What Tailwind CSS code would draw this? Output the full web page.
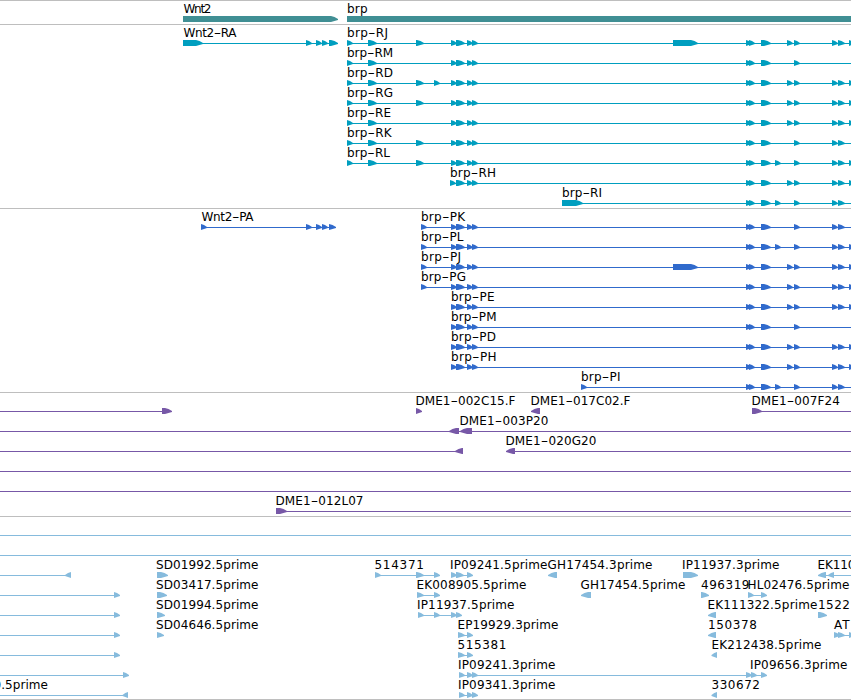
<!DOCTYPE html>
<html>
<head>
  <meta charset="UTF-8" />
  <title>Genome tracks</title>
  <script src="https://cdn.jsdelivr.net/npm/@tailwindcss/browser@4"></script>
</head>
<body class="bg-white overflow-hidden">
  <main class="flex flex-col w-[851px] h-[700px] overflow-hidden border-b border-[#bebebe]">
    <section id="genes" class="shrink-0 h-6 border-t border-[#bebebe] text-[#408f94]"></section>
    <section id="transcripts" class="shrink-0 h-[184px] border-t border-[#bebebe] text-[#009ebf]"></section>
    <section id="proteins" class="shrink-0 h-[184px] border-t border-[#bebebe] text-[#306acc]"></section>
    <section id="bacs" class="shrink-0 h-[124px] border-t border-[#bebebe] text-[#7758a7]"></section>
    <section id="ests" class="shrink-0 h-[183px] border-t border-[#bebebe] text-[#86bbdd]"></section>
  </main>

  <script>
    // exons are [start, end], a third value of -1 points the arrow left
    const END = 852;
    const start = [[451, 457], [456, 465], [467, 473], [472, 478]];
    const mid = [[746, 752], [749, 755], [761, 771]];
    const a = [775, 781], b = [787, 793], c = [794, 800];
    const tail = [[832, 838], [838, 845]];
    const edge = [849, 855];
    const five = [[347, 353], [368, 377]];
    const x416 = [416, 424];

    // row = { t: labels [text, x, width], l: lines [from, to], e: exons }
    const row = (t, l, e) => ({ t, l, e });

    const tracks = {
      genes: [
        row([["Wnt2", 183.5, 28], ["brp", 347, 20.5]], [], [[183, 338], [347, 860]]),
      ],
      transcripts: [
        row([["Wnt2-RA", 183.5, 53], ["brp-RJ", 347, 41]], [[183, 336], [347, END]],
          [[183, 203], [306, 312], [316, 322], [322, 328], [329, 338], ...five, x416, ...start, [673, 698], ...mid, b, c, ...tail, edge]),
        row([["brp-RM", 347, 46]], [[347, END]], [...five, ...start, ...mid, c]),
        row([["brp-RD", 347, 46]], [[347, END]], [...five, x416, [434, 440], ...start, ...mid, b, c, ...tail, edge]),
        row([["brp-RG", 347, 46]], [[347, END]], [...five, x416, ...start, ...mid, b, c, ...tail, edge]),
        row([["brp-RE", 347, 44]], [[347, END]], [...five, ...start, ...mid, b, c, ...tail, edge]),
        row([["brp-RK", 347, 44.5]], [[347, END]], [...five, x416, ...start, ...mid, c, ...tail]),
        row([["brp-RL", 347, 43]], [[347, END]], [...five, x416, ...start, ...mid, a, c, ...tail, edge]),
        row([["brp-RH", 450, 46]], [[450, END]], [[450, 456], ...start.slice(1), ...mid, b, c, ...tail, edge]),
        row([["brp-RI", 562, 40]], [[562, END]], [[562, 583], ...mid, a, c, ...tail]),
      ],
      proteins: [
        row([["Wnt2-PA", 201.5, 52], ["brp-PK", 421, 44]], [[201, 334], [421, END]],
          [[201, 207], [306, 312], [316, 322], [322, 328], [329, 336], [421, 427], ...start, ...mid, c, ...tail]),
        row([["brp-PL", 421, 42.5]], [[421, END]], [[421, 427], ...start, ...mid, a, c, ...tail, edge]),
        row([["brp-PJ", 421, 40]], [[421, END]], [[421, 427], ...start, [673, 698], ...mid, b, c, ...tail, edge]),
        row([["brp-PG", 421, 45]], [[421, END]], [[421, 427], ...start, ...mid, b, c, ...tail, edge]),
        row([["brp-PE", 451, 43.5]], [[451, END]], [...start, ...mid, b, c, ...tail, edge]),
        row([["brp-PM", 451, 45.5]], [[451, END]], [...start, ...mid, c]),
        row([["brp-PD", 451, 45]], [[451, END]], [...start, ...mid, b, c, ...tail, edge]),
        row([["brp-PH", 451, 45.5]], [[451, END]], [...start, ...mid, b, c, ...tail, edge]),
        row([["brp-PI", 581, 39.5]], [[581, END]], [[581, 587], ...mid, a, c, ...tail]),
      ],
      bacs: [
        row([["DME1-002C15.F", 415.5, 100], ["DME1-017C02.F", 530.5, 100], ["DME1-007F24", 751.5, 88.5]],
          [[0, 163], [752, END]], [[162, 172], [416, 422], [531, 540, -1], [752, 762]]),
        row([["DME1-003P20", 459.5, 89]], [[0, END]], [[449, 459, -1], [460, 472, -1]]),
        row([["DME1-020G20", 505.5, 91]], [[0, 462], [506, END]], [[455, 463, -1], [506, 515, -1]]),
        row([], [[0, END]], []),
        row([], [[0, END]], []),
        row([["DME1-012L07", 275.5, 88]], [[276, END]], [[276, 287]]),
      ],
      ests: [
        row([], [[0, END]], []),
        row([], [[0, END]], []),
        row([["SD01992.5prime", 156, 102.5], ["514371", 374.5, 49.5], ["IP09241.5prime", 450, 97.5], ["GH17454.3prime", 547.5, 105], ["IP11937.3prime", 682, 97.5], ["EK110", 817.5, 38]],
          [[0, 70], [375, 438], [451, 471], [819, END]],
          [[65, 71, -1], [157, 168], [375, 381], [416, 424], [434, 440], [451, 457], [456, 464], [467, 473], [548, 557, -1], [683, 698], [818, 826, -1], [828, 834, -1]]),
        row([["SD03417.5prime", 156, 102.5], ["EK008905.5prime", 416.5, 110], ["GH17454.5prime", 580.5, 105], ["496319", 701, 48.5], ["HL02476.5prime", 747.5, 102]],
          [[0, 118], [417, 438], [748, 765]],
          [[114, 120], [157, 167], [417, 424], [434, 440], [581, 591, -1], [701, 709], [748, 754], [761, 767]]),
        row([["SD01994.5prime", 156, 102.5], ["IP11937.5prime", 417, 97.5], ["EK111322.5prime", 707.5, 110], ["1522", 818, 32]],
          [[0, 118], [418, 461]],
          [[114, 120], [157, 165], [418, 424], [434, 440], [451, 457], [456, 462], [708, 716, -1], [818, 827]]),
        row([["SD04646.5prime", 156, 102.5], ["EP19929.3prime", 457.5, 101], ["150378", 708, 49], ["AT", 834, 15.5]],
          [[0, 118], [458, 471], [834, END]],
          [[114, 120], [157, 164], [458, 465], [467, 473], [708, 716, -1], [834, 840], [838, 845], [849, 855]]),
        row([["515381", 457.5, 49], ["EK212438.5prime", 711.5, 110]],
          [[0, 118], [458, 471]],
          [[114, 120], [458, 465], [467, 473], [711.5, 717, -1]]),
        row([["IP09241.3prime", 458, 97.5], ["IP09656.3prime", 750, 97.5]],
          [[0, 127], [459, 765]],
          [[123, 129], [459, 465], [467, 473], [472, 478], [746, 752], [751, 757], [761, 767]]),
        row([["0.5prime", -6.5, 54.5], ["IP09341.3prime", 458, 97.5], ["330672", 711.5, 48.5]],
          [[0, 127], [459, 476]],
          [[122.5, 128, -1], [459, 465], [467, 473], [472, 478], [711.5, 717, -1]]),
      ],
    };

    // flat back, slightly rounded head of at most 7px
    function arrow([x1, x2, dir]) {
      const head = Math.min(x2 - x1, 7);
      const back = dir === -1 ? x2 : x1;
      const tip = dir === -1 ? x1 : x2;
      const neck = dir === -1 ? tip + head : tip - head;
      const bend = (neck + tip) / 2;
      return `<polygon points="${back},15 ${neck},15 ${bend},16.1 ${tip},18 ${tip},19 ${bend},20 ${neck},21 ${back},21" />`;
    }

    function drawLabel([text, x, w]) {
      // the hyphen is drawn about as wide as a letter
      const wide = text.replace("-", `<tspan textLength="7.5" lengthAdjust="spacingAndGlyphs">-</tspan>`);
      return `<text class="fill-black font-['DejaVu_Sans',sans-serif] text-[12px]" x="${x}" y="12" textLength="${w}">${wide}</text>`;
    }

    function drawRow({ t, l, e }) {
      const lines = l.map(([x1, x2]) => `<rect x="${x1}" y="18" width="${x2 - x1}" height="1" />`).join("");
      return `<svg class="block w-full h-5 overflow-visible fill-current">${lines}${e.map(arrow).join("")}${t.map(drawLabel).join("")}</svg>`;
    }

    for (const id in tracks) {
      document.getElementById(id).innerHTML = tracks[id].map(drawRow).join("");
    }
  </script>
</body>
</html>
